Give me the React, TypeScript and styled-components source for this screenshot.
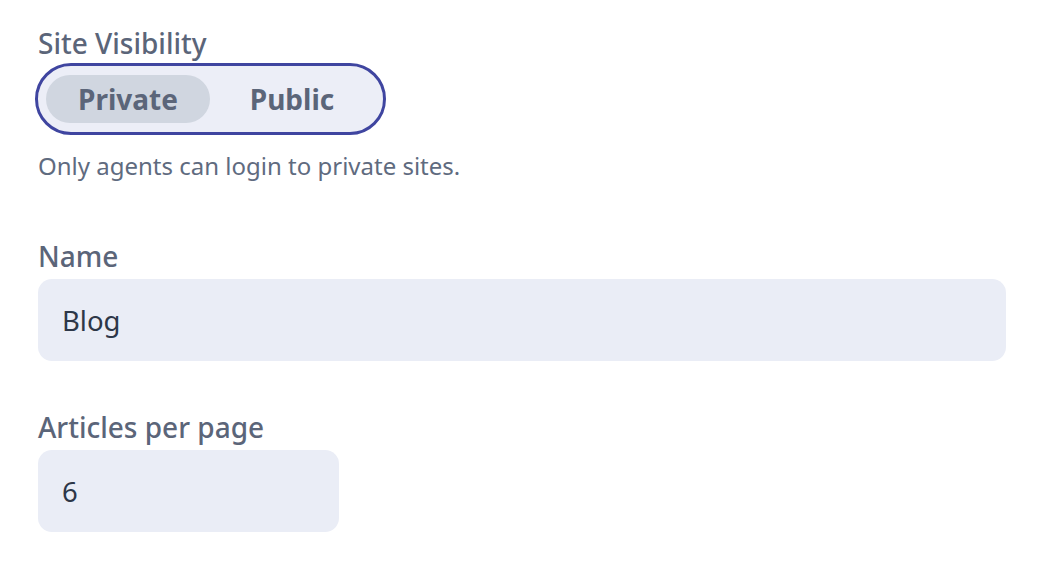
import React, { useState } from 'react';
import styled, { createGlobalStyle } from 'styled-components';

const GlobalStyle = createGlobalStyle`
  body {
    margin: 0;
    background: #ffffff;
    font-family: "Noto Sans", "Open Sans", sans-serif;
  }
`;

const Page = styled.div`
  padding: 26px 36px 0 38px;
  display: flex;
  flex-direction: column;
`;

const Field = styled.div<{ $gap?: number }>`
  display: flex;
  flex-direction: column;
  margin-bottom: ${p => p.$gap ?? 0}px;
`;

const Label = styled.label`
  font-size: 28px;
  font-weight: 500;
  color: #5b6579;
  line-height: 34px;
  margin-bottom: 6px;
`;

const Toggle = styled.div`
  display: inline-flex;
  align-self: flex-start;
  align-items: center;
  padding: 9px 9px 9px 8px;
  outline: 3px solid #3f45a0;
  border-radius: 999px;
  background: #eceef7;
`;

const ToggleOption = styled.button<{ $active: boolean }>`
  border: none;
  font-family: inherit;
  font-size: 28px;
  font-weight: 700;
  color: #5b6579;
  background: ${p => (p.$active ? '#d0d6e0' : 'transparent')};
  border-radius: 999px;
  height: 48px;
  width: 164px;
  padding: 0;
  cursor: pointer;
`;

const Help = styled.p`
  margin: 18px 0 0;
  font-size: 24px;
  color: #5f6b7f;
  line-height: 32px;
`;

const Input = styled.input<{ $width?: string }>`
  width: ${p => p.$width ?? '100%'};
  box-sizing: border-box;
  height: 82px;
  border: none;
  outline: none;
  border-radius: 14px;
  background: #eaedf6;
  padding: 0 24px;
  font-family: inherit;
  font-size: 27.5px;
  color: #2d3748;
`;

export default function App() {
  const [visibility, setVisibility] = useState<'private' | 'public'>('private');
  return (
    <>
      <GlobalStyle />
      <Page>
        <Field $gap={57}>
          <Label>Site Visibility</Label>
          <Toggle>
            <ToggleOption $active={visibility === 'private'} onClick={() => setVisibility('private')}>
              Private
            </ToggleOption>
            <ToggleOption $active={visibility === 'public'} onClick={() => setVisibility('public')}>
              Public
            </ToggleOption>
          </Toggle>
          <Help>Only agents can login to private sites.</Help>
        </Field>
        <Field $gap={49}>
          <Label>Name</Label>
          <Input defaultValue="Blog" $width="968px" />
        </Field>
        <Field>
          <Label>Articles per page</Label>
          <Input defaultValue="6" $width="301px" />
        </Field>
      </Page>
    </>
  );
}
